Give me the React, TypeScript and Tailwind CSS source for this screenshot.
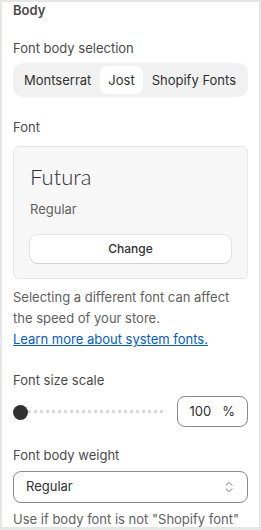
import { ChevronsUpDown } from "lucide-react";

const options = ["Montserrat", "Jost", "Shopify Fonts"];

export default function App() {
  return (
    <div className="h-[530px] w-[261px] border-x-2 border-t-2 border-b-[3px] border-[#e6e6e6] bg-white font-['Inter',sans-serif] text-[13px] text-[#303030]">
      <div className="px-[11px]">
        <h2 className="-mt-[1px] text-[13px] font-semibold leading-[18px] text-[#4a4a4a]">Body</h2>

        <p className="mt-[20px] leading-[18px] text-[#4a4a4a]">Font body selection</p>
        <div className="mt-[6px] flex items-center gap-[1px] rounded-[10px] bg-[#f1f1f1] p-[3px]">
          {options.map((o) => (
            <span
              key={o}
              className={
                o === "Jost"
                  ? "whitespace-nowrap rounded-[8px] bg-white px-[8px] py-[5px] leading-[18px] text-[#303030]"
                  : "whitespace-nowrap px-[8px] py-[5px] leading-[18px] text-[#303030]"
              }
            >
              {o}
            </span>
          ))}
        </div>

        <p className="mt-[21px] leading-[18px] text-[#4a4a4a]">Font</p>
        <div className="mt-[10px] rounded-[6px] border border-[#e6e6e6] bg-[#f7f7f7] px-[16px] pb-[15px] pt-[17px]">
          <div className="font-['Lato',sans-serif] text-[22px] font-light leading-[26px] text-[#303030]">
            Futura
          </div>
          <div className="mt-[10px] leading-[18px] text-[#616161]">Regular</div>
          <button className="mt-[17px] h-[28px] w-full rounded-[8px] bg-white text-[12px] font-medium text-[#303030] shadow-[0_1px_0_#d4d4d4,0_0_0_1px_#e3e3e3]">
            Change
          </button>
        </div>

        <p className="mt-[8px] leading-[21px] text-[#616161]">
          Selecting a different font can affect the speed of your store.
        </p>
        <a className="block leading-[20px] text-[#005bd3] underline">Learn more about system fonts.</a>

        <p className="mt-[22px] leading-[18px] text-[#4a4a4a]">Font size scale</p>
        <div className="mt-[7px] flex items-center">
          <div className="relative flex h-[16px] w-[150px] items-center">
            <div className="ml-[4px] h-[4px] flex-1 border-t-[3px] border-dotted border-[#d8d8d8]" />
            <div className="absolute left-0 top-[1px] h-[15px] w-[15px] rounded-full bg-[#303030]" />
          </div>
          <div className="ml-auto flex h-[31px] w-[71px] items-center justify-end gap-[11px] rounded-[8px] border border-[#8a8a8a] pr-[12px] text-[#303030]">
            <span>100</span>
            <span>%</span>
          </div>
        </div>

        <p className="mt-[19px] leading-[18px] text-[#4a4a4a]">Font body weight</p>
        <div className="mt-[7px] flex h-[32px] items-center justify-between rounded-[8px] border border-[#8a8a8a] pl-[12px] pr-[11px]">
          <span className="text-[#303030]">Regular</span>
          <ChevronsUpDown size={14} strokeWidth={1.5} className="text-[#616161]" />
        </div>
        <p className="mt-[7px] leading-[18px] text-[#616161]">Use if body font is not "Shopify font"</p>
      </div>
    </div>
  );
}
